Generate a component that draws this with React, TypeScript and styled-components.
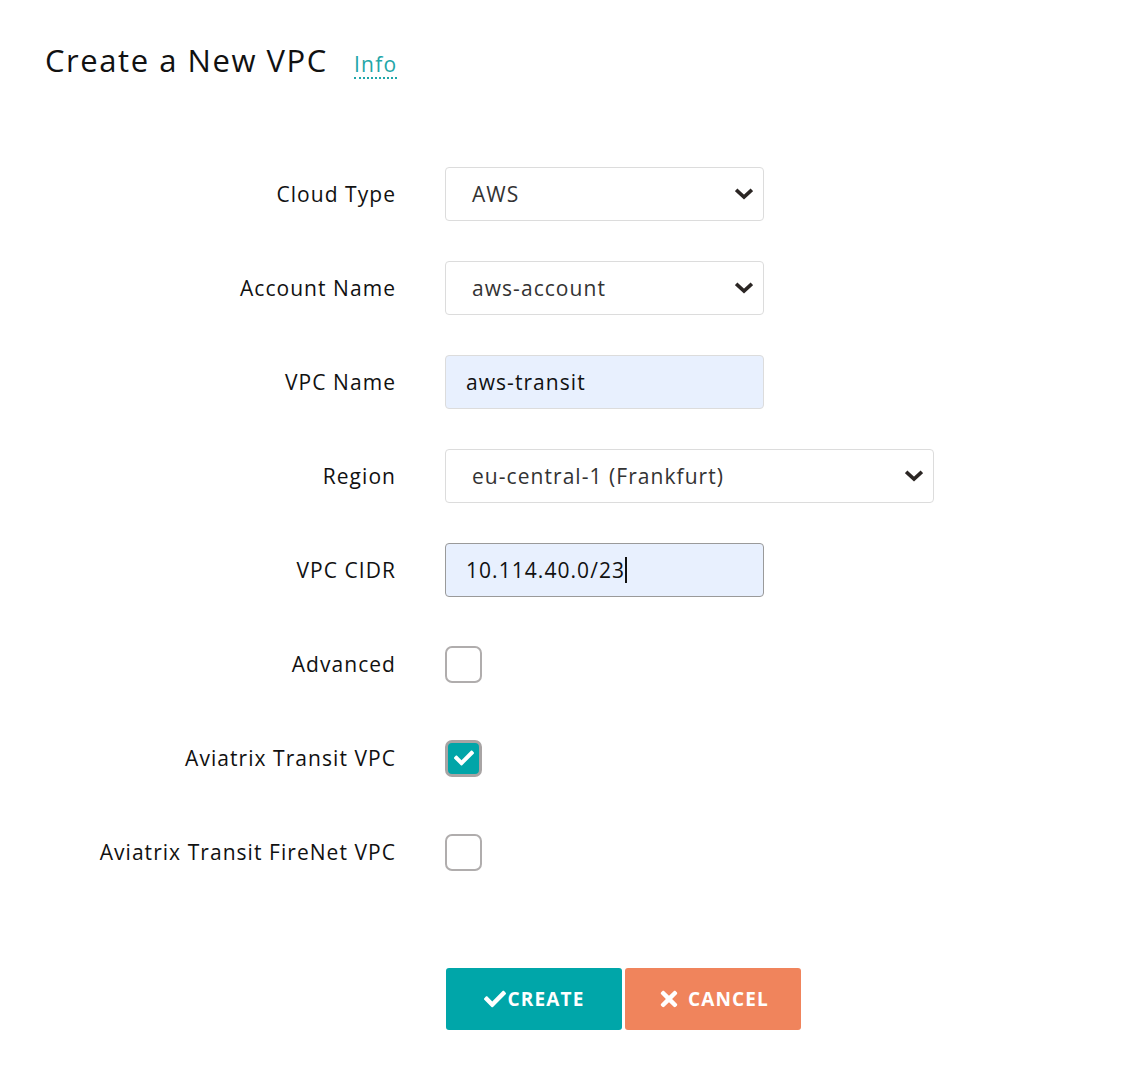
import React from "react";
import styled, { createGlobalStyle } from "styled-components";
import { FaCheck, FaTimes } from "react-icons/fa";

const font = `"Open Sans", "DejaVu Sans", sans-serif`;

const GlobalStyle = createGlobalStyle`
  body {
    margin: 0;
    background: #fff;
    font-family: ${font};
    color: #111;
  }
`;

const Page = styled.div`
  padding: 38px 45px 40px;
`;

const Header = styled.div`
  display: flex;
  align-items: baseline;
  gap: 26px;
`;

const Title = styled.h1`
  margin: 0;
  font-size: 31px;
  font-weight: 400;
  line-height: 44px;
  letter-spacing: 0.05em;
  color: #111;
`;

const InfoLink = styled.a`
  font-size: 21px;
  color: #1fa6a8;
  letter-spacing: 0.06em;
  text-decoration: none;
  border-bottom: 2px dotted #1fa6a8;
  line-height: 26px;
`;

const Form = styled.div`
  display: grid;
  grid-template-columns: 351px auto;
  column-gap: 49px;
  row-gap: 40px;
  margin-top: 85px;
  align-items: center;
  grid-auto-rows: 54px;
`;

const Label = styled.label`
  text-align: right;
  font-size: 21px;
  letter-spacing: 0.05em;
  color: #111;
`;

const Field = styled.div<{ $wide?: boolean }>`
  width: ${(p) => (p.$wide ? 489 : 319)}px;
  height: 54px;
  box-sizing: border-box;
  display: flex;
  align-items: center;
`;

const SelectBox = styled.div`
  flex: 1;
  height: 100%;
  box-sizing: border-box;
  border: 1.5px solid #dcdcdc;
  border-radius: 4px;
  display: flex;
  align-items: center;
  justify-content: space-between;
  padding: 0 10px 0 26px;
  font-size: 21px;
  letter-spacing: 0.05em;
  color: #333;
  background: #fff;
`;

const TextBox = styled.div<{ $focused?: boolean }>`
  flex: 1;
  height: 100%;
  box-sizing: border-box;
  border: 1.5px solid ${(p) => (p.$focused ? "#9a9a9a" : "#dcdcdc")};
  border-radius: 4px;
  display: flex;
  align-items: center;
  padding: 0 20px;
  font-size: 21px;
  letter-spacing: 0.05em;
  color: #111;
  background: #e8f0fe;
`;

const Caret = styled.span`
  display: inline-block;
  width: 2px;
  height: 26px;
  background: #111;
`;

const CheckBox = styled.div<{ $checked?: boolean }>`
  width: 37px;
  height: 37px;
  box-sizing: border-box;
  border-radius: 7px;
  border: ${(p) => (p.$checked ? "3px solid #a8a4a4" : "2px solid #b0adad")};
  background: ${(p) => (p.$checked ? "#00a5a8" : "#fff")};
  display: flex;
  align-items: center;
  justify-content: center;
  color: #fff;
  font-size: 20px;
`;

const Actions = styled.div`
  display: flex;
  gap: 3px;
  margin: 89px 0 0 401px;
`;

const Button = styled.button<{ $tone: "create" | "cancel" }>`
  width: 176px;
  height: 62px;
  border: 0;
  border-radius: 3px;
  background: ${(p) => (p.$tone === "create" ? "#00a6a9" : "#f0845c")};
  color: #fff;
  font-family: ${font};
  font-weight: 700;
  font-size: 19px;
  letter-spacing: 0.06em;
  display: flex;
  align-items: center;
  justify-content: center;
  gap: ${(p) => (p.$tone === "create" ? 2 : 7)}px;
  svg {
    font-size: ${(p) => (p.$tone === "create" ? 22 : 24)}px;
  }
`;

const Chevron = () => (
  <svg width="18" height="12" viewBox="0 0 18 12">
    <polyline
      points="2.5,3 9,9 15.5,3"
      fill="none"
      stroke="#2b2624"
      strokeWidth="3.6"
      strokeLinecap="square"
    />
  </svg>
);

const rows: { label: string; node: React.ReactNode }[] = [
  {
    label: "Cloud Type",
    node: (
      <Field>
        <SelectBox>
          AWS <Chevron />
        </SelectBox>
      </Field>
    ),
  },
  {
    label: "Account Name",
    node: (
      <Field>
        <SelectBox>
          aws-account <Chevron />
        </SelectBox>
      </Field>
    ),
  },
  {
    label: "VPC Name",
    node: (
      <Field>
        <TextBox>aws-transit</TextBox>
      </Field>
    ),
  },
  {
    label: "Region",
    node: (
      <Field $wide>
        <SelectBox>
          eu-central-1 (Frankfurt) <Chevron />
        </SelectBox>
      </Field>
    ),
  },
  {
    label: "VPC CIDR",
    node: (
      <Field>
        <TextBox $focused>
          10.114.40.0/23
          <Caret />
        </TextBox>
      </Field>
    ),
  },
  { label: "Advanced", node: <CheckBox /> },
  {
    label: "Aviatrix Transit VPC",
    node: (
      <CheckBox $checked>
        <FaCheck />
      </CheckBox>
    ),
  },
  { label: "Aviatrix Transit FireNet VPC", node: <CheckBox /> },
];

export default function App() {
  return (
    <Page>
      <GlobalStyle />
      <Header>
        <Title>Create a New VPC</Title>
        <InfoLink>Info</InfoLink>
      </Header>
      <Form>
        {rows.map((r) => (
          <React.Fragment key={r.label}>
            <Label>{r.label}</Label>
            {r.node}
          </React.Fragment>
        ))}
      </Form>
      <Actions>
        <Button $tone="create">
          <FaCheck />
          CREATE
        </Button>
        <Button $tone="cancel">
          <FaTimes />
          CANCEL
        </Button>
      </Actions>
    </Page>
  );
}
